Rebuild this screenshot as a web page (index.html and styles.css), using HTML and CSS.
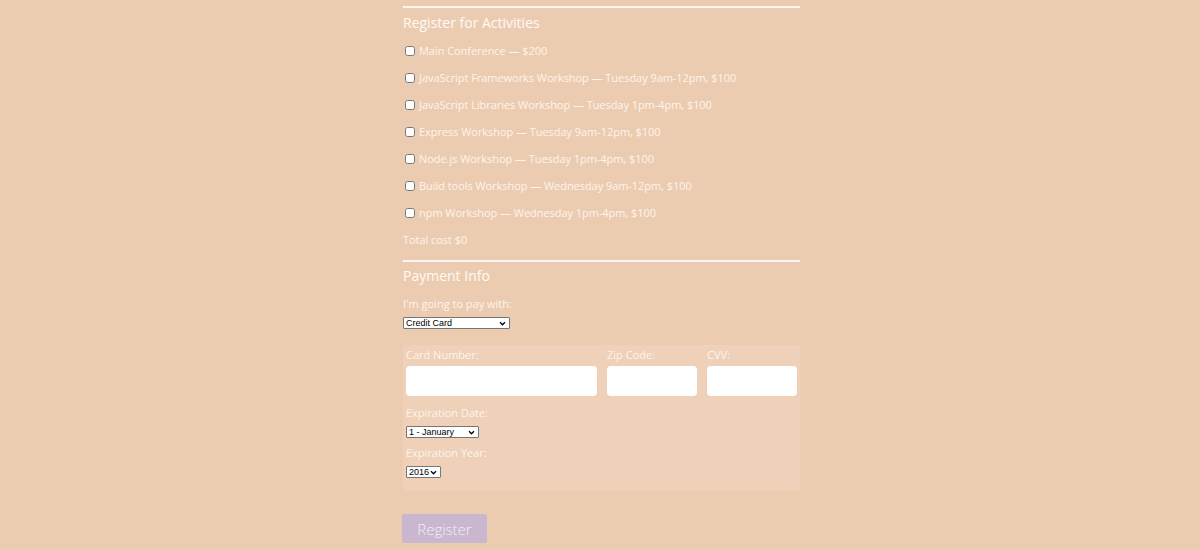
FILE: index.html
```html
<!DOCTYPE html>
<html lang="en">
<head>
<meta charset="utf-8">
<title>Register</title>
<link rel="stylesheet" href="styles.css">
</head>
<body>
<form class="form">
  <section class="section">
    <h2 class="legend">Register for Activities</h2>
    <label class="row"><input class="check" type="checkbox"> Main Conference — $200</label>
    <label class="row"><input class="check" type="checkbox"> JavaScript Frameworks Workshop — Tuesday 9am-12pm, $100</label>
    <label class="row"><input class="check" type="checkbox"> JavaScript Libraries Workshop — Tuesday 1pm-4pm, $100</label>
    <label class="row"><input class="check" type="checkbox"> Express Workshop — Tuesday 9am-12pm, $100</label>
    <label class="row"><input class="check" type="checkbox"> Node.js Workshop — Tuesday 1pm-4pm, $100</label>
    <label class="row"><input class="check" type="checkbox"> Build tools Workshop — Wednesday 9am-12pm, $100</label>
    <label class="row"><input class="check" type="checkbox"> npm Workshop — Wednesday 1pm-4pm, $100</label>
    <div class="row total">Total cost $0</div>
  </section>
  <section class="section payment">
    <h2 class="legend legend-pay">Payment Info</h2>
    <label class="pay-label" for="payment">I'm going to pay with:</label>
    <select class="sel sel-pay" id="payment">
      <option>Credit Card</option>
      <option>PayPal</option>
      <option>Bitcoin</option>
    </select>
    <div class="card">
      <div class="card-fields">
        <div class="field field-num">
          <label class="field-label">Card Number:</label>
          <input class="text" type="text">
        </div>
        <div class="field field-small">
          <label class="field-label">Zip Code:</label>
          <input class="text" type="text">
        </div>
        <div class="field field-small">
          <label class="field-label">CVV:</label>
          <input class="text" type="text">
        </div>
      </div>
      <label class="exp-label">Expiration Date:</label>
      <select class="sel sel-month">
        <option>1 - January</option>
        <option>2 - February</option>
      </select>
      <label class="exp-label exp-year">Expiration Year:</label>
      <select class="sel sel-year">
        <option>2016</option>
        <option>2017</option>
      </select>
    </div>
  </section>
  <button class="btn" type="button">Register</button>
</form>
</body>
</html>
```
FILE: styles.css
```css
* { box-sizing: border-box; }
html, body { margin: 0; padding: 0; }
body {
  background: #ecccb0;
  font-family: "Open Sans", Lato, sans-serif;
  font-weight: 400;
  color: #fdf4ec;
  height: 550px;
  overflow: hidden;
}
.form {
  width: 397px;
  margin-left: calc(50% - 197px);
  padding-top: 6px;
}
.section {
  border-top: 2px solid #fdf6f0;
}
.legend {
  margin: 0;
  font-size: 14px;
  font-weight: 500;
  line-height: 29px;
  color: #fffaf6;
}
.row {
  display: flex;
  align-items: center;
  height: 27px;
  font-size: 11px;
  letter-spacing: -0.05px;
  white-space: nowrap;
}
.check {
  width: 10px;
  height: 10px;
  margin: 0 4px 0 2px;
}
.payment { margin-top: 7px; }
.legend-pay { line-height: 28px; }
.pay-label {
  display: block;
  font-size: 11px;
  line-height: 24px;
  padding-top: 2px;
}
.sel {
  display: block;
  -webkit-appearance: none;
  appearance: none;
  font-family: "Liberation Sans", Arial, sans-serif;
  font-size: 9px;
  line-height: 10px;
  height: 12px;
  padding: 0 0 0 2px;
  margin: 1px 0 0;
  color: #000;
  background-color: #fff;
  background-image: url("data:image/svg+xml,%3Csvg xmlns='http://www.w3.org/2000/svg' width='8' height='6' viewBox='0 0 8 6'%3E%3Cpath d='M1 1.5 L4 4.5 L7 1.5' fill='none' stroke='%23000' stroke-width='1.6'/%3E%3C/svg%3E");
  background-repeat: no-repeat;
  background-position: right 3px center;
  background-size: 7px 5px;
  border: 1px solid #767676;
  border-radius: 1px;
}
.sel-pay { width: 107px; }
.sel-month { width: 73px; margin-top: 0; }
.sel-year { width: 35px; margin-top: 0; }
.card {
  margin-top: 16px;
  background: #eed1b8;
  border-radius: 3px;
  padding: 3px 3px 13px;
}
.card-fields {
  display: flex;
  gap: 10px;
}
.field { display: flex; flex-direction: column; }
.field-num { width: 191px; }
.field-small { width: 90px; }
.field-label {
  font-size: 11px;
  line-height: 14px;
  height: 18px;
}
.text {
  height: 30px;
  border: none;
  border-radius: 4px;
  background: #fff;
  width: 100%;
}
.exp-label {
  display: block;
  font-size: 11px;
  line-height: 26px;
  margin-top: 4px;
}
.exp-year { margin-top: 2px; }
.btn {
  display: block;
  margin: 23px 0 0 -1px;
  width: 85px;
  height: 29px;
  border: none;
  border-radius: 2px;
  background: #c9b7d0;
  color: #f6eef5;
  font-family: "Open Sans", sans-serif;
  font-weight: 300;
  font-size: 15px;
}
```
